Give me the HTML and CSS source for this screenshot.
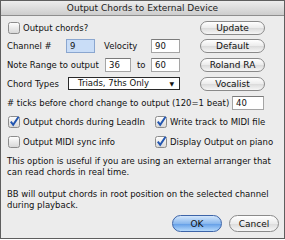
FILE: index.html
```html
<!DOCTYPE html>
<html lang="en">
<head>
    <meta charset="UTF-8">
    <meta name="viewport" content="width=device-width, initial-scale=1.0">
    <title>Output Chords to External Device</title>
    <link rel="stylesheet" href="styles.css">
</head>
<body>
    <div class="window">
        <div class="titlebar">Output Chords to External Device</div>

        <div class="content">
            <div class="top">
                <div class="row">
                    <span class="check">
                        <svg width="12" height="12" viewBox="0 0 12 12"><rect x="0.5" y="0.5" width="11" height="11" rx="2" fill="url(#box)" stroke="#8c8c8c"/></svg>
                    </span>
                    <span>Output chords?</span>
                </div>
                <div class="btn-cell"><button class="btn">Update</button></div>

                <div class="row">
                    <span class="lbl w-channel">Channel #</span>
                    <span class="field w-29 active">9</span>
                    <span class="lbl w-velocity">Velocity</span>
                    <span class="field w-29">90</span>
                </div>
                <div class="btn-cell"><button class="btn">Default</button></div>

                <div class="row">
                    <span class="lbl w-range">Note Range to output</span>
                    <span class="field w-26">36</span>
                    <span class="lbl w-to">to</span>
                    <span class="field w-29">60</span>
                </div>
                <div class="btn-cell"><button class="btn">Roland RA</button></div>

                <div class="row">
                    <span class="lbl w-types">Chord Types</span>
                    <span class="select">Triads, 7ths Only<span class="arrow">▼</span></span>
                </div>
                <div class="btn-cell"><button class="btn">Vocalist</button></div>
            </div>

            <div class="ticks">
                <span># ticks before chord change to output (120=1 beat)</span>
                <span class="field w-32">40</span>
            </div>

            <div class="options">
                <div class="row">
                    <span class="check">
                        <svg width="12" height="12" viewBox="0 0 12 12"><rect x="0.5" y="0.5" width="11" height="11" rx="2" fill="url(#box)" stroke="#8c8c8c"/><path d="M2.8 5.6 L5.2 8.8 L10.6 0.8" fill="none" stroke="#2356b0" stroke-width="2"/></svg>
                    </span>
                    <span>Output chords during LeadIn</span>
                </div>
                <div class="row">
                    <span class="check">
                        <svg width="12" height="12" viewBox="0 0 12 12"><rect x="0.5" y="0.5" width="11" height="11" rx="2" fill="url(#box)" stroke="#8c8c8c"/><path d="M2.8 5.6 L5.2 8.8 L10.6 0.8" fill="none" stroke="#2356b0" stroke-width="2"/></svg>
                    </span>
                    <span>Write track to MIDI file</span>
                </div>
                <div class="row">
                    <span class="check">
                        <svg width="12" height="12" viewBox="0 0 12 12"><rect x="0.5" y="0.5" width="11" height="11" rx="2" fill="url(#box)" stroke="#8c8c8c"/></svg>
                    </span>
                    <span>Output MIDI sync info</span>
                </div>
                <div class="row">
                    <span class="check">
                        <svg width="12" height="12" viewBox="0 0 12 12"><rect x="0.5" y="0.5" width="11" height="11" rx="2" fill="url(#box)" stroke="#8c8c8c"/><path d="M2.8 5.6 L5.2 8.8 L10.6 0.8" fill="none" stroke="#2356b0" stroke-width="2"/></svg>
                    </span>
                    <span>Display Output on piano</span>
                </div>
            </div>

            <p class="note">This option is useful if you are using an external arranger that<br>can read chords in real time.</p>
            <p class="note">BB will output chords in root position on the selected channel<br>during playback.</p>

            <div class="actions">
                <button class="btn big default">OK</button>
                <button class="btn big">Cancel</button>
            </div>
        </div>
    </div>

    <svg width="0" height="0" class="defs">
        <defs>
            <linearGradient id="box" x1="0" y1="0" x2="0" y2="1">
                <stop offset="0" stop-color="#ffffff"/>
                <stop offset="1" stop-color="#d6d6d6"/>
            </linearGradient>
        </defs>
    </svg>
</body>
</html>
```

FILE: styles.css
```css
body {
    margin: 0;
    padding: 0;
    background-color: #ffffff;
    font-family: 'DejaVu Sans', sans-serif;
    font-size: 8.5px;
    color: #111111;
}
.defs {
    position: absolute;
}
.window {
    width: 285px;
    height: 239px;
    box-sizing: border-box;
    border: 1px solid #5e5e5e;
    background-color: #ececec;
}
.titlebar {
    height: 14px;
    line-height: 14px;
    text-align: center;
    font-size: 9px;
    color: #222222;
    background: linear-gradient(#ededed, #cdcdcd);
    border-bottom: 1px solid #8e8e8e;
}
.content {
    padding: 3px 5px 0 6px;
}
.top {
    display: grid;
    grid-template-columns: 193px 65px;
    grid-template-rows: 17px 19px 19px 19px;
}
.row {
    display: flex;
    align-items: center;
}
.btn-cell {
    display: flex;
    align-items: center;
}
.check {
    display: flex;
    width: 12px;
    height: 12px;
    margin-left: 1px;
    margin-right: 3px;
}
.lbl {
    display: inline-block;
}
.w-channel { width: 59px; }
.w-velocity { width: 47px; margin-left: 9px; }
.w-range { width: 98px; }
.w-to { width: 14px; margin-left: 6px; }
.w-types { width: 61px; }
.field {
    display: inline-block;
    box-sizing: border-box;
    height: 14px;
    line-height: 12px;
    padding-left: 3px;
    background-color: #ffffff;
    border: 1px solid #a5a5a5;
    border-top-color: #7a7a7a;
    font-size: 8.5px;
}
.field.active {
    background-color: #c9ddf7;
    border-color: #8aa6cf;
}
.w-26 { width: 26px; }
.w-29 { width: 29px; }
.w-32 { width: 32px; }
.select {
    position: relative;
    display: inline-block;
    box-sizing: border-box;
    width: 112px;
    height: 13px;
    line-height: 11px;
    padding-left: 9px;
    background-color: #ffffff;
    border: 1px solid #2a2a2a;
}
.select .arrow {
    position: absolute;
    right: 5px;
    top: 0;
    font-size: 6px;
}
.btn {
    box-sizing: border-box;
    width: 65px;
    height: 14px;
    padding: 0;
    border: 1px solid #8a8a8a;
    border-radius: 8px;
    background: linear-gradient(#ffffff, #ebebeb 50%, #dadada 51%, #f6f6f6);
    font-family: 'DejaVu Sans', sans-serif;
    font-size: 9px;
    color: #111111;
}
.ticks {
    display: flex;
    align-items: center;
    height: 19px;
    width: 257px;
}
.ticks .field {
    margin-left: auto;
}
.options {
    display: grid;
    grid-template-columns: 147px 1fr;
    grid-auto-rows: 20px;
}
.note {
    margin: 4px 0 11px 0;
    line-height: 11px;
}
.note + .note {
    margin-top: 0;
    margin-bottom: 4px;
}
.actions {
    display: flex;
    justify-content: flex-end;
    gap: 7px;
}
.btn.big {
    width: 50px;
    height: 17px;
    border-radius: 9px;
}
.btn.default {
    border-color: #3d64a8;
    background: linear-gradient(#d3e6fb, #8ab8ee 50%, #5f9be6 51%, #b6dafc);
}
```
